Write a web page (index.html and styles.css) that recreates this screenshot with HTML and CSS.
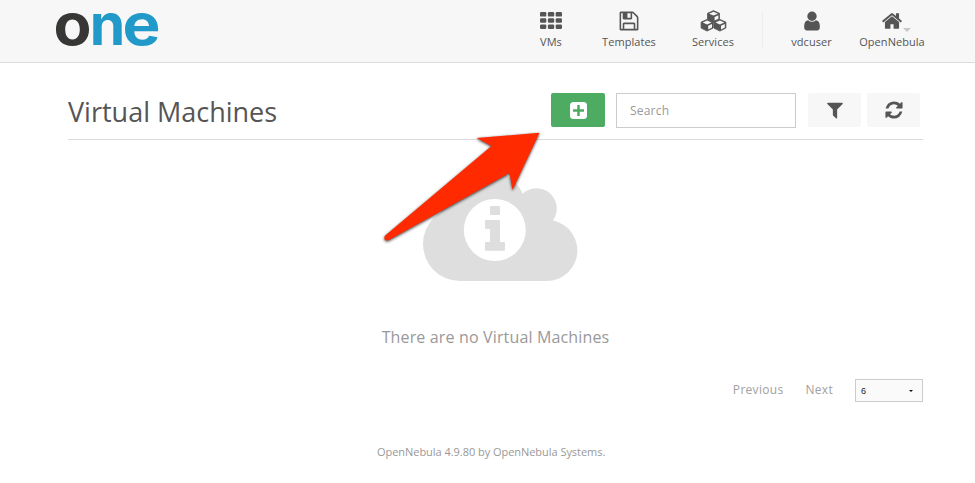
FILE: index.html
```html
<!DOCTYPE html>
<html lang="en">
<head>
<meta charset="utf-8">
<title>OpenNebula</title>
<link rel="stylesheet" href="styles.css">
</head>
<body>
<header class="topbar">
  <svg class="logo" width="110" height="62" viewBox="0 0 110 62"><text x="-1.500" y="45.300" textLength="38" lengthAdjust="spacingAndGlyphs" class="logo-o">o</text><text x="34.700" y="45">n</text><text x="67.500" y="45.300" textLength="38" lengthAdjust="spacingAndGlyphs">e</text></svg>
  <nav class="nav">
    <a class="nav-item vms">
      <svg width="22" height="22" viewBox="0 0 22 22"><g><rect y="2" width="6.3" height="4.6" rx="1.2"/><rect x="7.9" y="2" width="6.3" height="4.6" rx="1.2"/><rect x="15.7" y="2" width="6.3" height="4.6" rx="1.2"/><rect y="8.2" width="6.3" height="4.6" rx="1.2"/><rect x="7.9" y="8.2" width="6.3" height="4.6" rx="1.2"/><rect x="15.7" y="8.2" width="6.3" height="4.6" rx="1.2"/><rect y="14.4" width="6.3" height="4.6" rx="1.2"/><rect x="7.9" y="14.4" width="6.3" height="4.6" rx="1.2"/><rect x="15.7" y="14.4" width="6.3" height="4.6" rx="1.2"/></g></svg>
      <span>VMs</span>
    </a>
    <a class="nav-item templates">
      <svg width="22" height="22" viewBox="0 0 1792 1792"><path d="M512 1536h768v-384h-768v384zm896 0h128v-896q0-14-10-38.500t-20-34.500l-281-281q-10-10-34-20t-39-10v416q0 40-28 68t-68 28h-576q-40 0-68-28t-28-68v-416h-128v1280h128v-416q0-40 28-68t68-28h832q40 0 68 28t28 68v416zm-384-928v-320q0-13-9.500-22.500t-22.500-9.500h-192q-13 0-22.500 9.500t-9.500 22.500v320q0 13 9.500 22.500t22.500 9.500h192q13 0 22.500-9.500t9.500-22.500zm640 32v928q0 40-28 68t-68 28h-1344q-40 0-68-28t-28-68v-1344q0-40 28-68t68-28h928q40 0 88 20t76 48l280 280q28 28 48 76t20 88z"/></svg>
      <span>Templates</span>
    </a>
    <a class="nav-item services">
      <svg width="27" height="22" viewBox="0 0 27 22">
        <defs><g id="cube"><path d="M6.500 0L12.500 2.700V8.700L6.500 11.700L.5 8.700V2.700Z" stroke="#555" stroke-linejoin="round" stroke-width=".8"/><path class="face" d="M6.500 1.200L10.900 3.100L6.500 5L2.100 3.100ZM7.600 6.400L11.400 4.700V8.100L7.600 10Z"/></g></defs>
        <use href="#cube" x="7" y=".6"/><use href="#cube" x=".6" y="9.400"/><use href="#cube" x="13.400" y="9.400"/>
      </svg>
      <span>Services</span>
    </a>
    <i class="divider"></i>
    <a class="nav-item user">
      <svg width="22" height="22" viewBox="0 0 1792 1792"><path d="M1536 1399q0 109-62.500 187t-150.500 78h-854q-88 0-150.500-78t-62.500-187q0-85 8.500-160.500t31.500-152 58.500-131 94-89 134.500-34.500q131 128 313 128t313-128q76 0 134.500 34.500t94 89 58.500 131 31.500 152 8.500 160.500zm-256-887q0 159-112.500 271.500t-271.500 112.500-271.500-112.500-112.500-271.500 112.500-271.500 271.500-112.500 271.500 112.500 112.500 271.500z"/></svg>
      <span>vdcuser</span>
    </a>
    <a class="nav-item zone">
      <svg width="22" height="22" viewBox="0 0 1792 1792"><path d="M1472 992v480q0 26-19 45t-45 19h-384v-384h-256v384h-384q-26 0-45-19t-19-45v-480q0-1 .5-3t.5-3l575-474 575 474q1 2 1 6zm223-69l-62 74q-8 9-21 11h-3q-13 0-21-7l-692-577-692 577q-12 8-24 7-13-2-21-11l-62-74q-8-10-7-23.500t11-21.500l719-599q32-26 76-26t76 26l244 204v-195q0-14 9-23t23-9h192q14 0 23 9t9 23v408l219 182q10 8 11 21.500t-7 23.500z"/></svg>
      <span>OpenNebula</span>
      <i class="caret"></i>
    </a>
  </nav>
</header>

<main class="content">
  <div class="heading">
    <h1>Virtual Machines</h1>
    <button class="btn add"><svg width="17" height="17" viewBox="0 0 17 17"><rect width="17" height="17" rx="3.500"/><path d="M8.500 3V14M3 8.500H14"/></svg></button>
    <input class="search" type="text" placeholder="Search">
    <button class="btn filter"><svg width="20" height="20" viewBox="0 0 1792 1792"><path d="M1595 295q17 41-14 70l-493 493v742q0 42-39 59-13 5-25 5-27 0-45-19l-256-256q-19-19-19-45v-486l-493-493q-31-29-14-70 17-39 59-39h1280q42 0 59 39z"/></svg></button>
    <button class="btn refresh"><svg width="20" height="20" viewBox="0 0 1792 1792"><path d="M1639 1056q0 5-1 7-64 268-268 434.500t-478 166.500q-146 0-282.500-55t-243.500-157l-129 129q-19 19-45 19t-45-19-19-45v-448q0-26 19-45t45-19h448q26 0 45 19t19 45-19 45l-137 137q71 66 161 102t187 36q134 0 250-65t186-179q11-17 53-117 8-23 30-23h192q13 0 22.500 9.500t9.500 22.500zm25-800v448q0 26-19 45t-45 19h-448q-26 0-45-19t-19-45 19-45l138-138q-148-137-349-137-134 0-250 65t-186 179q-11 17-53 117-8 23-30 23h-199q-13 0-22.500-9.500t-9.500-22.500v-7q65-268 270-434.500t480-166.500q146 0 284 55.500t245 156.500l130-129q19-19 45-19t45 19 19 45z"/></svg></button>
  </div>

  <section class="empty">
    <svg class="cloud" width="156" height="114" viewBox="422 168 156 114">
      <g fill="#dedede"><circle cx="460" cy="244" r="37"/><circle cx="484" cy="212" r="43"/><circle cx="536.500" cy="208.500" r="20.300"/><circle cx="546.800" cy="250.400" r="30.600"/><rect x="460" y="215" width="87" height="66"/></g>
      <circle cx="494.800" cy="230" r="31" fill="#fff"/>
      <g fill="#dedede"><rect x="490" y="206" width="10" height="9" rx="1"/><path d="M486 220H499Q500 220 500 221V242H504Q505 242 505 243V249.700Q505 250.700 504 250.700H486Q485 250.700 485 249.700V243Q485 242 486 242H490V229H486Q485 229 485 228V221Q485 220 486 220Z"/></g>
    </svg>
    <p>There are no Virtual Machines</p>
  </section>

  <div class="pager">
    <a class="prev">Previous</a>
    <a class="next">Next</a>
    <div class="size"><span>6</span><i></i></div>
  </div>
</main>

<footer class="footer">OpenNebula 4.9.80 by OpenNebula Systems.</footer>

<svg class="pointer" width="175" height="125" viewBox="375 125 175 125"><path d="M539.500 132.800L476.500 138L491.500 146L385.200 235.500Q383.500 238 385 239.700Q386.500 241.200 389 240L509.500 173L512.500 190Z"/></svg>
</body>
</html>
```
FILE: styles.css
```css
* { box-sizing: border-box; }

body {
  margin: 0;
  height: 483px;
  overflow: hidden;
  position: relative;
  background: #fff;
  color: #555;
  font-family: "Open Sans", sans-serif;
}

.topbar {
  display: flex;
  justify-content: space-between;
  height: 63px;
  padding: 0 43px 0 55px;
  background: #f7f7f7;
  border-bottom: 1px solid #dcdcdc;
}

.logo {
  overflow: visible;
  fill: #2199c9;
  font: 650 57px Inter, sans-serif;
}
.logo .logo-o { fill: #373836; }

.nav { display: flex; }
.nav-item {
  position: relative;
  display: flex;
  flex-direction: column;
  align-items: center;
  padding-top: 10px;
  font-size: 11px;
  line-height: 16px;
  letter-spacing: .05px;
}
.nav-item svg { fill: #555; margin-bottom: 2px; }
.nav-item .face { fill: #f7f7f7; }
.vms { width: 70px; }
.templates { width: 86px; }
.services { width: 82px; }
.divider { width: 1px; height: 36px; margin: 11px 8px 0; background: #eee; }
.user { width: 81px; }
.zone { width: 80px; }
.caret {
  position: absolute;
  right: 21px;
  top: 28px;
  border: 4px solid transparent;
  border-top-color: #c8c8c8;
  border-bottom: 0;
}

.content { padding: 30px 52px 0 68px; }
.heading {
  display: flex;
  height: 47px;
  border-bottom: 1px solid #dcdcdc;
  padding-right: 3px;
}
h1 {
  flex: 1;
  margin: 0;
  font-size: 27px;
  font-weight: 400;
  line-height: 38px;
}
.btn {
  display: flex;
  align-items: center;
  justify-content: center;
  width: 53px;
  height: 34px;
  padding: 0;
  border: 0;
  border-radius: 2px;
  background: #f7f7f7;
}
.btn svg { fill: #555; }
.add { width: 54px; background: #4dab62; }
.add svg { fill: #fff; }
.add path { stroke: #4dab62; stroke-width: 2.5; }
.search {
  width: 180px;
  height: 35px;
  margin: 0 12px 0 11px;
  padding: 0 13px;
  border: 1px solid #ccc;
  font: 12px "Open Sans", sans-serif;
  letter-spacing: .2px;
}
.search::placeholder { color: #9a9a9a; }
.refresh { margin-left: 6px; }

.empty {
  display: flex;
  flex-direction: column;
  align-items: center;
  padding: 28px 0 0;
  color: #999;
}
.cloud { margin-left: 8px; }
.empty p {
  margin: 43px 0 0;
  font-size: 16px;
  line-height: 24px;
  letter-spacing: .15px;
}

.pager {
  display: flex;
  justify-content: flex-end;
  margin-top: 30px;
  color: #a0a0a0;
  font-size: 12px;
  line-height: 21px;
  letter-spacing: .3px;
}
.next { margin: 0 22px 0 22px; }
.size {
  display: flex;
  align-items: center;
  justify-content: space-between;
  width: 68px;
  height: 23px;
  padding: 0 9px 0 5px;
  border: 1px solid #ccc;
  background: #fafafa;
  color: #222;
  font: 9px "Liberation Sans", sans-serif;
}
.size i {
  border: 2px solid transparent;
  border-top-color: #111;
  border-bottom: 0;
}

.footer {
  margin: 42px 0 0 377px;
  color: #999;
  font-size: 11px;
  line-height: 16px;
  letter-spacing: -.04px;
}

.pointer {
  position: absolute;
  left: 375px;
  top: 125px;
  fill: #ff2a00;
  filter: drop-shadow(0 1px 1.5px rgba(0, 0, 0, .75));
}
```
